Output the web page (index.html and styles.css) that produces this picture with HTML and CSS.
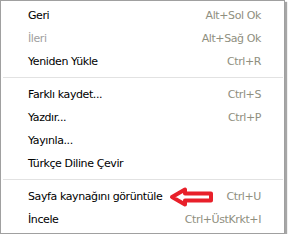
FILE: index.html
```html
<!DOCTYPE html>
<html lang="tr">
<head>
    <meta charset="UTF-8">
    <title>Bağlam menüsü</title>
    <link rel="stylesheet" href="styles.css">
</head>
<body>
    <div class="menu">
        <div class="menu-item">
            <span class="label">Geri</span>
            <span class="shortcut">Alt+Sol Ok</span>
        </div>
        <div class="menu-item disabled">
            <span class="label">İleri</span>
            <span class="shortcut">Alt+Sağ Ok</span>
        </div>
        <div class="menu-item">
            <span class="label">Yeniden Yükle</span>
            <span class="shortcut">Ctrl+R</span>
        </div>

        <div class="separator"></div>

        <div class="menu-item">
            <span class="label">Farklı kaydet...</span>
            <span class="shortcut">Ctrl+S</span>
        </div>
        <div class="menu-item">
            <span class="label">Yazdır...</span>
            <span class="shortcut">Ctrl+P</span>
        </div>
        <div class="menu-item">
            <span class="label">Yayınla...</span>
        </div>
        <div class="menu-item">
            <span class="label">Türkçe Diline Çevir</span>
        </div>

        <div class="separator"></div>

        <div class="menu-item">
            <span class="label">Sayfa kaynağını görüntüle</span>
            <span class="shortcut">Ctrl+U</span>
            <svg class="red-arrow" width="46" height="22" viewBox="0 0 46 22">
                <path d="M3 11 L16 3.5 L16 7.5 L42 7.5 L42 14.5 L16 14.5 L16 18.5 Z" fill="#fff" stroke="#e8202a" stroke-width="4" stroke-linejoin="round"/>
            </svg>
        </div>
        <div class="menu-item">
            <span class="label">İncele</span>
            <span class="shortcut">Ctrl+ÜstKrkt+I</span>
        </div>
    </div>
</body>
</html>
```

FILE: styles.css
```css
* {
    margin: 0;
    padding: 0;
    box-sizing: border-box;
}

body {
    background-color: #fff;
    font-family: "DejaVu Sans", Tahoma, sans-serif;
    font-size: 11px;
    letter-spacing: -0.4px;
    color: #000;
}

.menu {
    width: 285px;
    height: 234px;
    padding: 3px 0 2px 0;
    background-color: #fff;
    border: 1px solid #a0a0a0;
    box-shadow: 2px 2px 1px rgba(0, 0, 0, 0.35);
}

.menu-item {
    position: relative;
    display: flex;
    justify-content: space-between;
    align-items: center;
    height: 23px;
    padding: 0 23px 0 27px;
}

.menu-item.disabled .label {
    color: #a0a0a0;
}

.shortcut {
    color: #8f8f80;
}

.separator {
    height: 10px;
    margin: 0 1px 0 2px;
    background: linear-gradient(#e2e2e2, #e2e2e2) no-repeat 0 4px / 100% 1px;
}

.red-arrow {
    position: absolute;
    left: 168px;
    top: 1px;
}
```
